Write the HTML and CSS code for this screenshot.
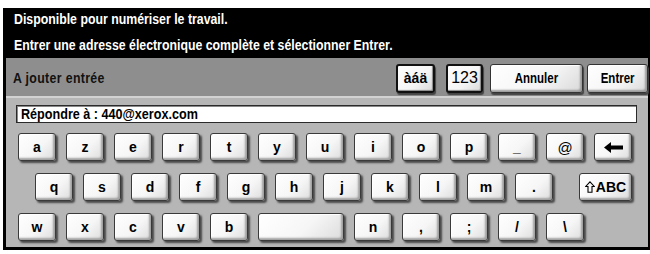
FILE: index.html
```html
<!DOCTYPE html>
<html lang="fr">
<head>
<meta charset="utf-8">
<title>Clavier</title>
<link rel="stylesheet" href="styles.css">
</head>
<body>
<div class="screen">
  <div class="status">
    <div class="line"><span class="narrow">Disponible pour numériser le travail.</span></div>
    <div class="line second"><span class="narrow">Entrer une adresse électronique complète et sélectionner Entrer.</span></div>
  </div>
  <div class="panel">
    <div class="header">
      <div class="title"><span class="narrow">A jouter entrée</span></div>
      <div class="hbtns">
        <div class="hbtn toggle accents">àáä</div>
        <div class="hbtn toggle nums">123</div>
        <div class="hbtn cancel"><span class="narrow mid">Annuler</span></div>
        <div class="hbtn enter"><span class="narrow mid">Entrer</span></div>
      </div>
    </div>
    <div class="sep"></div>
    <div class="kbd">
      <div class="field"><span class="narrow wide">Répondre à : 440@xerox.com</span></div>
      <div class="row r1">
        <div class="key">a</div><div class="key">z</div><div class="key">e</div><div class="key">r</div><div class="key">t</div><div class="key">y</div><div class="key">u</div><div class="key">i</div><div class="key">o</div><div class="key">p</div><div class="key">_</div><div class="key at">@</div>
        <div class="key"><svg width="19" height="11" viewBox="0 0 19 11"><polygon points="0,5.5 7,0 7,3.5 19,3.5 19,7.5 7,7.5 7,11" fill="#000"/></svg></div>
      </div>
      <div class="row r2">
        <div class="key">q</div><div class="key">s</div><div class="key">d</div><div class="key">f</div><div class="key">g</div><div class="key">h</div><div class="key">j</div><div class="key">k</div><div class="key">l</div><div class="key">m</div><div class="key">.</div>
        <div class="key shift"><svg width="10" height="12" viewBox="0 0 10 12"><polygon points="5,0.8 9.3,5.5 7,5.5 7,11.3 3,11.3 3,5.5 0.7,5.5" fill="none" stroke="#000" stroke-width="1.1"/></svg><span>ABC</span></div>
      </div>
      <div class="row r3">
        <div class="key">w</div><div class="key">x</div><div class="key">c</div><div class="key">v</div><div class="key">b</div><div class="key space"></div><div class="key">n</div><div class="key">,</div><div class="key">;</div><div class="key">/</div><div class="key">\</div>
      </div>
    </div>
  </div>
</div>
</body>
</html>
```
FILE: styles.css
```css
html, body {
  margin: 0;
  padding: 0;
  background: #fff;
}
body {
  width: 650px;
  height: 254px;
  overflow: hidden;
  font-family: "Liberation Sans", Arial, sans-serif;
}
.narrow {
  display: inline-block;
  white-space: nowrap;
  transform: scaleX(0.88);
  transform-origin: 0 50%;
}
.narrow.mid {
  transform: scaleX(0.82);
  transform-origin: 50% 50%;
}
.narrow.wide {
  transform: scaleX(0.9);
}
.screen {
  margin: 8px 0 0 3px;
  background: #000;
  padding: 0 2px 3px 3px;
  width: 642px;
}
.status {
  height: 50px;
  box-sizing: border-box;
  padding: 3px 0 0 8px;
  color: #fff;
  font-weight: bold;
  font-size: 14px;
  line-height: 16px;
}
.status .second {
  margin-top: 10px;
}
.panel {
  background: #b6b6b6;
}
.header {
  height: 38px;
  background: #8e8e8e;
  display: flex;
  align-items: center;
  justify-content: space-between;
  padding: 0 0 0 7px;
}
.title {
  font-weight: bold;
  font-size: 14px;
  color: #111;
  letter-spacing: 0.4px;
  margin-top: 1px;
}
.hbtns {
  display: flex;
  align-items: center;
  height: 30px;
  margin-top: 2px;
}
.hbtn {
  height: 29px;
  box-sizing: border-box;
  border: 1px solid #333;
  border-radius: 3px;
  background: linear-gradient(135deg, #ffffff 0%, #f4f4f4 60%, #d8d8d8 100%);
  box-shadow: inset -2px -2px 2px #9a9a9a, inset 1px 1px 0 #fff, 1px 2px 1px #444;
  display: flex;
  align-items: center;
  justify-content: center;
  color: #000;
  font-weight: bold;
}
.toggle {
  border: 2px solid #111;
  box-shadow: inset -1px -1px 1px #888, 1px 2px 1px #444;
}
.accents {
  width: 39px;
  font-size: 14px;
  margin-right: 11px;
}
.nums {
  width: 37px;
  font-size: 16px;
  font-weight: normal;
  margin-right: 7px;
}
.cancel, .enter {
  font-size: 14px;
}
.cancel {
  width: 93px;
  margin-right: 4px;
}
.enter {
  width: 61px;
}
.sep {
  height: 2px;
  background: #d2d2d2;
}
.kbd {
  height: 149px;
  box-sizing: border-box;
  padding: 7px 0 0 10px;
}
.field {
  width: 621px;
  height: 18px;
  box-sizing: border-box;
  background: #fff;
  border: 1px solid #2a2a2a;
  box-shadow: inset 1px 1px 0 #888;
  font-weight: bold;
  font-size: 14px;
  line-height: 16px;
  padding-left: 4px;
  color: #000;
}
.row {
  display: flex;
  gap: 10px;
  margin-left: 2px;
}
.r1 {
  margin-top: 10px;
}
.r2 {
  margin-top: 12px;
  margin-left: 19px;
}
.r3 {
  margin-top: 12px;
}
.key {
  width: 38px;
  height: 28px;
  box-sizing: border-box;
  border: 1px solid #3a3a3a;
  border-radius: 3px;
  background: linear-gradient(135deg, #ffffff 0%, #f6f6f6 55%, #dcdcdc 100%);
  box-shadow: inset -2px -2px 2px #a0a0a0, inset 1px 1px 0 #fff, 2px 2px 2px #4a4a4a;
  display: flex;
  align-items: center;
  justify-content: center;
  font-weight: bold;
  font-size: 14px;
  color: #000;
}
.key.at {
  font-weight: normal;
  font-size: 15px;
}
.key.space {
  width: 86px;
}
.key.shift {
  width: 53px;
  margin-left: 16px;
  gap: 1px;
}
.key.shift span {
  font-size: 14px;
}
```
